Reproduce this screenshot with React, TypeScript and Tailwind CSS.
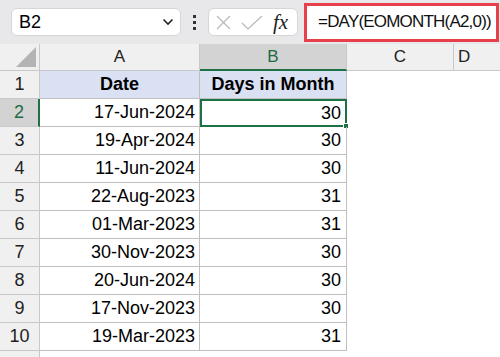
import React from "react";

const ROWS = [
  { date: "17-Jun-2024", days: 30 },
  { date: "19-Apr-2024", days: 30 },
  { date: "11-Jun-2024", days: 30 },
  { date: "22-Aug-2023", days: 31 },
  { date: "01-Mar-2023", days: 31 },
  { date: "30-Nov-2023", days: 30 },
  { date: "20-Jun-2024", days: 30 },
  { date: "17-Nov-2023", days: 30 },
  { date: "19-Mar-2023", days: 31 },
];

const font = { fontFamily: '"Liberation Sans", Arial, sans-serif' };

export default function App() {
  return (
    <div className="w-[500px] h-[357px] overflow-hidden bg-white text-black" style={font}>
      {/* Formula toolbar */}
      <div className="h-[44px] bg-[#e8e8ea] flex items-center">
        <div className="ml-[11px] w-[170px] h-[28px] bg-white rounded-[6px] border border-[#d6d6d6] flex items-center pl-[7px] pr-[6px]">
          <span className="text-[18px] flex-1">B2</span>
          <svg width="12" height="8" viewBox="0 0 12 8">
            <path d="M1.5 1.5 L6 6 L10.5 1.5" fill="none" stroke="#222" strokeWidth="1.6" />
          </svg>
        </div>
        <div className="w-[27px] flex flex-col items-center gap-[3px]">
          <div className="w-[3px] h-[3px] bg-[#333]" />
          <div className="w-[3px] h-[3px] bg-[#333]" />
          <div className="w-[3px] h-[3px] bg-[#333]" />
        </div>
        <div className="w-[90px] h-[28px] bg-white rounded-[6px] border border-[#d6d6d6] flex items-center pl-[7px] gap-[10px]">
          <svg width="15" height="15" viewBox="0 0 15 15">
            <path d="M1 1 L14 14 M14 1 L1 14" stroke="#b8b8b8" strokeWidth="1.2" />
          </svg>
          <svg width="22" height="15" viewBox="0 0 22 15">
            <path d="M1 8 L7 14 L21 1" fill="none" stroke="#b8b8b8" strokeWidth="1.2" />
          </svg>
          <span className="text-[21px] leading-none italic text-[#222]" style={{ fontFamily: '"Liberation Serif", serif' }}>
            fx
          </span>
        </div>
        <div className="ml-[6px] w-[195px] h-[39px] border-[3px] border-[#e8404b] bg-white flex items-center pl-[11px]">
          <span className="text-[17px] tracking-[-0.8px] text-[#111]">=DAY(EOMONTH(A2,0))</span>
        </div>
      </div>

      {/* Column headers */}
      <div className="flex h-[27px] bg-[#f0f0f0] text-[17px] text-[#222]">
        <div className="w-[40px] border-r border-b border-[#c8c8c8] flex items-end justify-end pr-[3px] pb-[3px]">
          <svg width="20" height="20" viewBox="0 0 20 20">
            <path d="M20 0 L20 20 L0 20 Z" fill="#b4b4b4" />
          </svg>
        </div>
        <div className="w-[160px] border-r border-b border-[#c8c8c8] flex items-center justify-center">A</div>
        <div className="w-[147px] bg-[#d3d3d3] border-r border-[#c8c8c8] border-b-2 border-b-[#1e7145] flex items-center justify-center text-[#1e6b41]">
          B
        </div>
        <div className="w-[107px] border-r border-b border-[#c8c8c8] flex items-center justify-center">C</div>
        <div className="flex-1 border-b border-[#c8c8c8] pl-[4px] flex items-center">D</div>
      </div>

      {/* Row 1 */}
      <div className="flex h-[28px] text-[18px]">
        <div className="w-[40px] bg-[#f0f0f0] border-r border-b border-[#c8c8c8] flex items-center justify-center text-[#222]">
          1
        </div>
        <div className="w-[160px] bg-[#d9e1f2] border-r border-b border-[#bfbfbf] flex items-center justify-center font-bold">
          Date
        </div>
        <div className="w-[147px] bg-[#d9e1f2] border-r border-b border-[#bfbfbf] flex items-center justify-center font-bold">
          Days in Month
        </div>
        <div className="flex-1" />
      </div>

      {/* Data rows */}
      {ROWS.map((r, i) => {
        const sel = i === 0;
        return (
          <div key={i} className="flex h-[28px] text-[18px]">
            <div
              className={`w-[40px] border-b border-[#c8c8c8] flex items-center justify-center ${
                sel ? "bg-[#d3d3d3] border-r-2 border-r-[#1e7145] text-[#1e6b41]" : "bg-[#f0f0f0] border-r text-[#222]"
              }`}
            >
              {i + 2}
            </div>
            <div className="w-[160px] border-r border-b border-[#bfbfbf] flex items-center justify-end pr-[4px]">
              {r.date}
            </div>
            <div
              className={`relative w-[147px] flex items-center justify-end ${
                sel ? "border-2 border-[#1e7145] pr-[4px]" : "border-r border-b border-[#bfbfbf] pr-[5px]"
              }`}
            >
              {r.days}
              {sel && <div className="absolute right-[-4px] bottom-[-4px] w-[6px] h-[6px] bg-[#1e7145] border border-white" />}
            </div>
            <div className="flex-1" />
          </div>
        );
      })}
      <div className="flex h-[10px]">
        <div className="w-[40px] bg-[#f0f0f0] border-r border-[#c8c8c8]" />
      </div>
    </div>
  );
}
